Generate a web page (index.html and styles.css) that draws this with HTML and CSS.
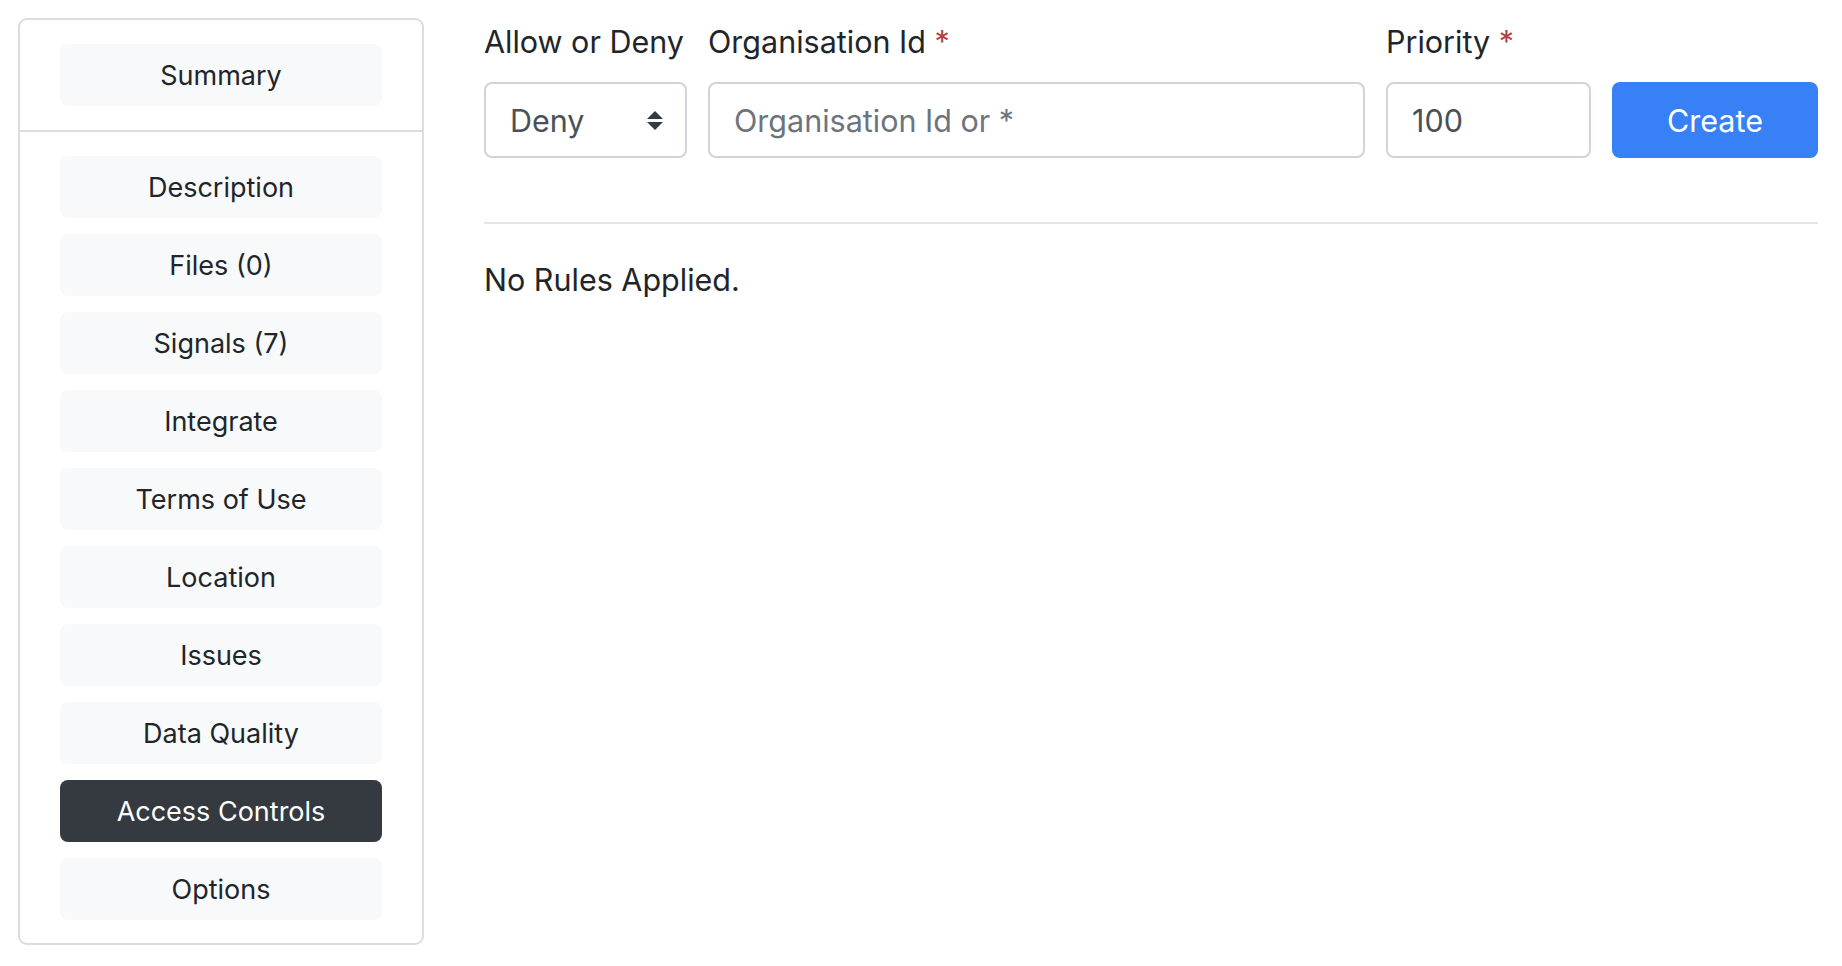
FILE: index.html
```html
<!DOCTYPE html>
<html lang="en">
<head>
<meta charset="utf-8">
<title>Access Controls</title>
<link rel="stylesheet" href="styles.css">
</head>
<body>
<div class="page">
  <aside class="sidebar">
    <div class="side-top">
      <a class="nav-btn">Summary</a>
    </div>
    <nav class="side-list">
      <a class="nav-btn">Description</a>
      <a class="nav-btn">Files (0)</a>
      <a class="nav-btn">Signals (7)</a>
      <a class="nav-btn">Integrate</a>
      <a class="nav-btn">Terms of Use</a>
      <a class="nav-btn">Location</a>
      <a class="nav-btn">Issues</a>
      <a class="nav-btn">Data Quality</a>
      <a class="nav-btn active">Access Controls</a>
      <a class="nav-btn">Options</a>
    </nav>
  </aside>
  <main class="main">
    <form class="rule-form">
      <div class="field f-select">
        <label class="label">Allow or Deny</label>
        <div class="select-wrap">
          <select class="control select">
            <option>Deny</option>
            <option>Allow</option>
          </select>
          <svg class="select-arrow" width="16" height="20" viewBox="0 0 16 20"><path d="M8 0 L16 8 L0 8 Z M0 11 L16 11 L8 19 Z" fill="#343a40"/></svg>
        </div>
      </div>
      <div class="field f-org">
        <label class="label">Organisation Id <span class="req">*</span></label>
        <input class="control" type="text" placeholder="Organisation Id or *">
      </div>
      <div class="field f-priority">
        <label class="label">Priority <span class="req">*</span></label>
        <input class="control" type="text" value="100">
      </div>
      <div class="field f-submit">
        <span class="label">&nbsp;</span>
        <button class="create" type="button">Create</button>
      </div>
    </form>
    <hr class="divider">
    <p class="empty">No Rules Applied.</p>
  </main>
</div>
</body>
</html>
```

FILE: styles.css
```css
html, body {
  margin: 0;
  padding: 0;
  background: #ffffff;
}
body {
  font-family: "Inter", "Liberation Sans", Arial, sans-serif;
  color: #212529;
}
.page {
  display: flex;
  align-items: flex-start;
  gap: 60px;
  padding: 18px 24px 0 18px;
}
.sidebar {
  width: 406px;
  box-sizing: border-box;
  border: 2px solid #dcdcdc;
  border-radius: 9px;
  flex: none;
}
.side-top {
  padding: 24px 40px 24px;
  border-bottom: 2px solid #dcdcdc;
}
.side-list {
  display: flex;
  flex-direction: column;
  gap: 16px;
  padding: 24px 40px 23px;
}
.nav-btn {
  display: flex;
  align-items: center;
  justify-content: center;
  height: 62px;
  background: #f8f9fa;
  border-radius: 8px;
  font-size: 27px;
  color: #212529;
  text-decoration: none;
}
.nav-btn.active {
  background: #343a40;
  color: #ffffff;
}
.main {
  flex: 1;
  min-width: 0;
}
.rule-form {
  display: flex;
  gap: 21px;
  align-items: flex-end;
}
.field {
  display: flex;
  flex-direction: column;
}
.f-select { width: 203px; }
.f-org { flex: 1; }
.f-priority { width: 205px; }
.f-submit { width: 206px; }
.label {
  font-size: 30.5px;
  line-height: 48px;
  margin-bottom: 16px;
  color: #212529;
  white-space: nowrap;
}
.req { color: #b0423f; }
.control {
  box-sizing: border-box;
  width: 100%;
  height: 76px;
  border: 2px solid #ced4da;
  border-radius: 8px;
  padding: 0 24px;
  font-family: "Inter", "Liberation Sans", Arial, sans-serif;
  font-size: 30.5px;
  color: #495057;
  background: #ffffff;
  outline: none;
  margin: 0;
}
.control::placeholder { color: #6c757d; opacity: 1; }
.select-wrap { position: relative; }
.select {
  -webkit-appearance: none;
  appearance: none;
  padding-right: 56px;
}
.select-arrow {
  position: absolute;
  right: 24px;
  top: 29px;
  pointer-events: none;
}
.create {
  box-sizing: border-box;
  height: 76px;
  width: 100%;
  border: none;
  border-radius: 8px;
  background: #3780f6;
  color: #ffffff;
  font-family: "Inter", "Liberation Sans", Arial, sans-serif;
  font-size: 30.5px;
}
.divider {
  border: 0;
  border-top: 2px solid #e5e5e5;
  margin: 64px 0 32px;
}
.empty {
  margin: 0;
  font-size: 30.5px;
  line-height: 48px;
  color: #212529;
}
```
